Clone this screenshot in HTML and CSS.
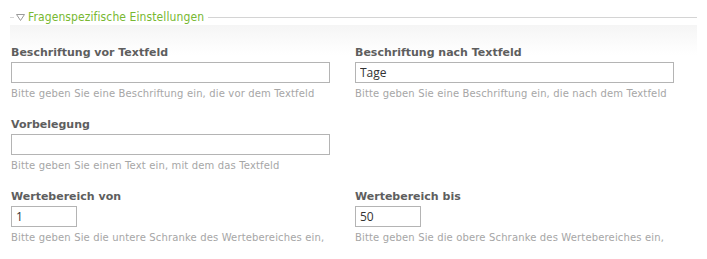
FILE: index.html
```html
<!DOCTYPE html>
<html>
  <head>
    <meta charset="UTF-8" />
    <title>Fragenspezifische Einstellungen</title>
    <link rel="stylesheet" href="styles.css">
  </head>
  <body>
    <div class="fieldset">
      <div class="legend">
        <span class="dash"></span>
        <svg class="toggle" width="9" height="7" viewBox="0 0 9 7">
          <path d="M0.5 0.5 H8.5 L4.5 6.5 Z" fill="none" stroke="#9a9a9a" stroke-width="1" />
        </svg>
        <span class="legend-text">Fragenspezifische Einstellungen</span>
        <span class="line"></span>
      </div>
      <div class="fields">
        <div class="field">
          <label class="label">Beschriftung vor Textfeld</label>
          <input class="input wide" type="text" value="">
          <div class="hint">Bitte geben Sie eine Beschriftung ein, die vor dem Textfeld</div>
        </div>
        <div class="field">
          <label class="label">Beschriftung nach Textfeld</label>
          <input class="input wide" type="text" value="Tage">
          <div class="hint">Bitte geben Sie eine Beschriftung ein, die nach dem Textfeld</div>
        </div>
        <div class="field">
          <label class="label">Vorbelegung</label>
          <input class="input wide" type="text" value="">
          <div class="hint">Bitte geben Sie einen Text ein, mit dem das Textfeld</div>
        </div>
        <div class="field"></div>
        <div class="field">
          <label class="label">Wertebereich von</label>
          <input class="input small" type="text" value="1">
          <div class="hint">Bitte geben Sie die untere Schranke des Wertebereiches ein,</div>
        </div>
        <div class="field">
          <label class="label">Wertebereich bis</label>
          <input class="input small" type="text" value="50">
          <div class="hint">Bitte geben Sie die obere Schranke des Wertebereiches ein,</div>
        </div>
      </div>
    </div>
  </body>
</html>
```

FILE: styles.css
```css
body {
  margin: 0;
  padding: 0;
  background-color: #fff;
  font-family: "DejaVu Sans", Verdana, sans-serif;
}

.fieldset {
  margin: 9px 10px 0 10px;
}

.legend {
  display: flex;
  align-items: center;
  height: 16px;
}

.dash {
  width: 4px;
  height: 1px;
  background-color: #d4d4d4;
}

.toggle {
  margin: 0 3px 0 2px;
}

.legend-text {
  font-family: "DejaVu Sans Condensed", "DejaVu Sans", sans-serif;
  font-size: 12px;
  letter-spacing: 0.1px;
  color: #78b832;
  padding-right: 4px;
}

.line {
  flex: 1;
  height: 1px;
  background-color: #d4d4d4;
}

.fields {
  display: grid;
  grid-template-columns: 344px 1fr;
  padding: 21px 0 0 1px;
  background: linear-gradient(to bottom, #f5f5f5 0, #ffffff 30px);
}

.field {
  height: 72px;
}

.label {
  display: block;
  font-size: 11px;
  font-weight: bold;
  color: #5e5e5e;
  line-height: 14px;
  margin-bottom: 2px;
}

.input {
  display: block;
  box-sizing: border-box;
  height: 21px;
  border: 1px solid #b4b4b4;
  padding: 0 4px;
  font-family: "Open Sans", sans-serif;
  font-size: 12px;
  color: #333;
  background-color: #fff;
  outline: none;
}

.wide {
  width: 319px;
}

.small {
  width: 66px;
}

.hint {
  font-size: 10px;
  letter-spacing: 0.15px;
  color: #a6a6a6;
  margin-top: 4px;
  line-height: 13px;
}
```
